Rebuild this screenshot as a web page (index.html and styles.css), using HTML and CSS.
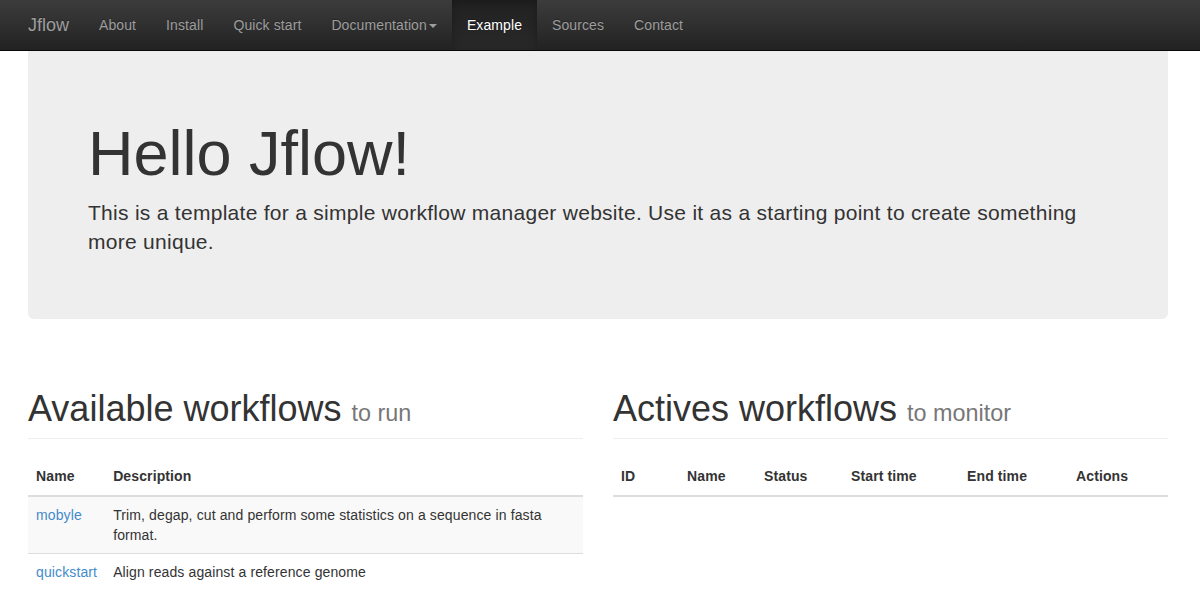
FILE: index.html
```html
<!DOCTYPE html>
<html>
<head>
<meta charset="utf-8">
<title>Jflow</title>
<link rel="stylesheet" href="styles.css">
</head>
<body>
<nav class="navbar">
  <div class="nav-inner">
    <a class="brand" href="#">Jflow</a>
    <ul class="nav">
      <li><a href="#">About</a></li>
      <li><a href="#">Install</a></li>
      <li><a href="#">Quick start</a></li>
      <li><a href="#">Documentation<span class="caret"></span></a></li>
      <li class="active"><a href="#">Example</a></li>
      <li><a href="#">Sources</a></li>
      <li><a href="#">Contact</a></li>
    </ul>
  </div>
</nav>
<div class="container">
  <div class="jumbotron">
    <h1>Hello Jflow!</h1>
    <p>This is a template for a simple workflow manager website. Use it as a starting point to create something more unique.</p>
  </div>
  <div class="row">
    <div class="col">
      <h1 class="page-header">Available workflows <small>to run</small></h1>
      <table class="table striped">
        <thead>
          <tr><th class="w-name">Name</th><th>Description</th></tr>
        </thead>
        <tbody>
          <tr><td><a href="#">mobyle</a></td><td>Trim, degap, cut and perform some statistics on a sequence in fasta format.</td></tr>
          <tr><td><a href="#">quickstart</a></td><td>Align reads against a reference genome</td></tr>
        </tbody>
      </table>
    </div>
    <div class="col">
      <h1 class="page-header">Actives workflows <small>to monitor</small></h1>
      <table class="table">
        <thead>
          <tr><th class="c-id">ID</th><th class="c-name">Name</th><th class="c-status">Status</th><th class="c-start">Start time</th><th class="c-end">End time</th><th>Actions</th></tr>
        </thead>
        <tbody></tbody>
      </table>
    </div>
  </div>
</div>
</body>
</html>
```
FILE: styles.css
```css
* { box-sizing: border-box; }
html, body { margin: 0; padding: 0; }
body {
  font-family: "Liberation Sans", Arial, sans-serif;
  font-size: 14px;
  line-height: 20px;
  color: #333;
  background: #fff;
}
a { color: #428bca; text-decoration: none; }

.navbar {
  height: 51px;
  background-image: linear-gradient(to bottom, #3c3c3c 0, #222 100%);
  border-bottom: 1px solid #080808;
}
.nav-inner {
  display: flex;
  margin-left: 13px;
  height: 50px;
}
.brand {
  display: block;
  padding: 15px;
  font-size: 18px;
  line-height: 20px;
  height: 50px;
  color: #9d9d9d;
  text-shadow: 0 -1px 0 rgba(0,0,0,.25);
}
.nav {
  display: flex;
  list-style: none;
  margin: 0;
  padding: 0;
}
.nav a {
  display: block;
  padding: 15px;
  line-height: 20px;
  letter-spacing: 0.1px;
  color: #9d9d9d;
  text-shadow: 0 -1px 0 rgba(0,0,0,.25);
}
.nav .active a {
  color: #fff;
  background-image: linear-gradient(to bottom, #222 0, #282828 100%);
  box-shadow: inset 0 3px 9px rgba(0,0,0,.25);
}
.caret {
  display: inline-block;
  width: 0;
  height: 0;
  margin-left: 2px;
  vertical-align: middle;
  border-top: 4px solid;
  border-right: 4px solid transparent;
  border-left: 4px solid transparent;
}

.container {
  width: 1140px;
  margin-left: 28px;
}
.jumbotron {
  background: #eee;
  border-radius: 0 0 6px 6px;
  padding: 48px 60px;
  margin-bottom: 30px;
}
.jumbotron h1 {
  margin: 20px 0 10px;
  font-size: 63px;
  line-height: 69px;
  font-weight: 500;
  color: #333;
}
.jumbotron p {
  margin: 0 0 15px;
  font-size: 21px;
  line-height: 29px;
  letter-spacing: 0.28px;
  font-weight: 200;
}

.row {
  display: flex;
  gap: 30px;
}
.col {
  flex: 1 1 0;
  min-width: 0;
}
.page-header {
  margin: 40px 0 20px;
  padding-bottom: 9px;
  border-bottom: 1px solid #eee;
  font-size: 36px;
  line-height: 40px;
  font-weight: 500;
}
.page-header small {
  font-size: 65%;
  color: #777;
  font-weight: 400;
  line-height: 1;
}

.table {
  width: 100%;
  border-collapse: collapse;
  border-spacing: 0;
  letter-spacing: 0.12px;
}
.table th, .table td {
  padding: 8px;
  line-height: 20px;
  text-align: left;
  vertical-align: top;
}
.table th {
  vertical-align: bottom;
  padding-top: 7px;
  padding-bottom: 9px;
  border-bottom: 2px solid #ddd;
  font-weight: bold;
}
.table tbody tr + tr td { border-top: 1px solid #ddd; }
.striped tbody tr:nth-child(odd) { background: #f9f9f9; }
.w-name { width: 77px; }
.c-id { width: 66px; }
.c-name { width: 77px; }
.c-status { width: 87px; }
.c-start { width: 116px; }
.c-end { width: 109px; }
```
